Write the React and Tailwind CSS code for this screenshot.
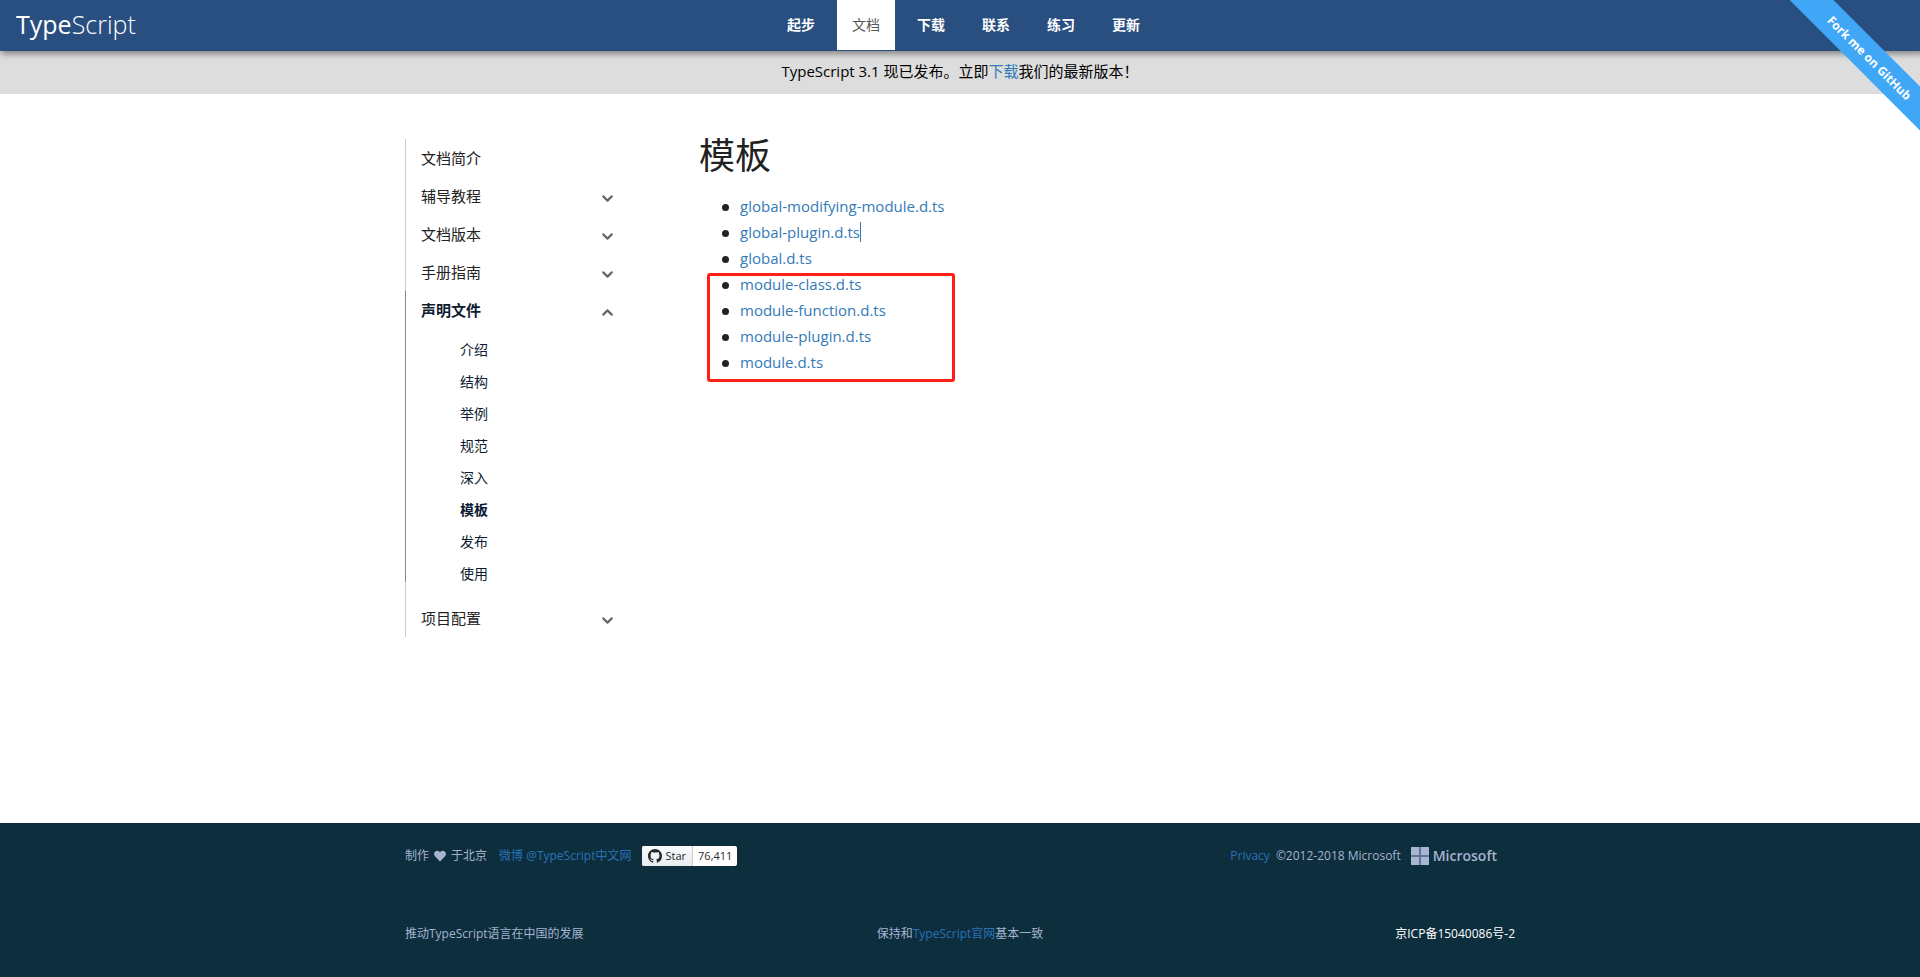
import { FaHeart } from "react-icons/fa";
import { FiChevronDown, FiChevronUp } from "react-icons/fi";

const navLinks = [
  { name: "起步" },
  { name: "文档", active: true },
  { name: "下载" },
  { name: "联系" },
  { name: "练习" },
  { name: "更新" },
];

const menu = [
  { name: "文档简介" },
  { name: "辅导教程", items: [] },
  { name: "文档版本", items: [] },
  { name: "手册指南", items: [] },
  {
    name: "声明文件",
    open: true,
    items: ["介绍", "结构", "举例", "规范", "深入", "模板", "发布", "使用"],
  },
  { name: "项目配置", items: [] },
];

const templates = [
  "global-modifying-module.d.ts",
  "global-plugin.d.ts",
  "global.d.ts",
];

const moduleTemplates = [
  "module-class.d.ts",
  "module-function.d.ts",
  "module-plugin.d.ts",
  "module.d.ts",
];

function Navbar() {
  return (
    <header className="relative z-10 flex h-[51px] items-start justify-center bg-[#294e80] shadow-[3px_1px_6px_2px_rgba(0,0,0,0.4)]">
      <a
        href="#"
        className="absolute left-4 top-0 text-[25px] leading-[48px] text-white"
      >
        Type<span className="font-light">Script</span>
      </a>
      <nav className="flex gap-[7px] pl-[7px]">
        {navLinks.map((link) => (
          <a
            key={link.name}
            href="#"
            className={`px-[15px] text-sm leading-[50px] ${
              link.active ? "bg-white text-[#555]" : "font-bold text-white"
            }`}
          >
            {link.name}
          </a>
        ))}
      </nav>
    </header>
  );
}

function Ribbon() {
  return (
    <div className="pointer-events-none absolute right-0 top-0 z-20 h-[150px] w-[150px] overflow-hidden">
      <a
        href="#"
        className="absolute -right-[48px] top-[41px] block w-[200px] rotate-45 bg-[#3fa7f5] pl-1 text-center text-xs font-bold leading-[31px] text-white"
      >
        Fork me on GitHub
      </a>
    </div>
  );
}

function Sidebar() {
  return (
    <aside className="w-[219px] shrink-0">
      <ul className="border-l border-[#ccc]">
        {menu.map((section) => (
          <li
            key={section.name}
            className={
              section.open ? "-ml-px mb-[17px] border-l border-[#888]" : ""
            }
          >
            <button
              className={`flex h-[38px] w-full items-center justify-between pl-[15px] pr-2 text-[15px] ${
                section.open ? "font-bold text-[#0d1b33]" : "text-[#222]"
              }`}
            >
              {section.name}
              {section.items &&
                (section.open ? (
                  <FiChevronUp size={17} strokeWidth={3} className="mt-1 text-[#666]" />
                ) : (
                  <FiChevronDown size={17} strokeWidth={3} className="mt-1 text-[#666]" />
                ))}
            </button>
            {section.open && (
              <ul className="flex flex-col gap-4 pl-[54px] pt-[13px] text-sm leading-4 text-[#0d1b33]">
                {section.items.map((item) => (
                  <li key={item}>
                    <a href="#" className={item === "模板" ? "font-bold" : ""}>
                      {item}
                    </a>
                  </li>
                ))}
              </ul>
            )}
          </li>
        ))}
      </ul>
    </aside>
  );
}

function FileList({ files }) {
  return (
    <ul className="pl-[23px]">
      {files.map((file) => (
        <li
          key={file}
          className="flex h-[26px] items-center before:mr-[11px] before:mt-0.5 before:h-[7px] before:w-[7px] before:rounded-full before:bg-[#222]"
        >
          <a
            href="#"
            className={`leading-5 text-[#337ab7] ${
              file === "global-plugin.d.ts" ? "border-r border-[#337ab7]" : ""
            }`}
          >
            {file}
          </a>
        </li>
      ))}
    </ul>
  );
}

function Content() {
  return (
    <main className="pl-[75px]">
      <h1 className="text-4xl leading-[34px] text-[#222]">模板</h1>
      <div className="mt-5 text-[15px]">
        <FileList files={templates} />
        <div className="relative">
          <FileList files={moduleTemplates} />
          <div className="pointer-events-none absolute left-2 top-0.5 h-[109px] w-[248px] rounded-[3px] border-3 border-[#ff2015]"></div>
        </div>
      </div>
    </main>
  );
}

function GithubMark() {
  return (
    <svg viewBox="0 0 16 16" className="h-3.5 w-3.5 fill-[#24292e]">
      <path d="M8 0C3.58 0 0 3.58 0 8c0 3.54 2.29 6.53 5.47 7.59.4.07.55-.17.55-.38 0-.19-.01-.82-.01-1.49-2.01.37-2.53-.49-2.69-.94-.09-.23-.48-.94-.82-1.13-.28-.15-.68-.52-.01-.53.63-.01 1.08.58 1.23.82.72 1.21 1.87.87 2.33.66.07-.52.28-.87.51-1.07-1.78-.2-3.64-.89-3.64-3.95 0-.87.31-1.59.82-2.15-.08-.2-.36-1.02.08-2.12 0 0 .67-.21 2.2.82.64-.18 1.32-.27 2-.27.68 0 1.36.09 2 .27 1.53-1.04 2.2-.82 2.2-.82.44 1.1.16 1.92.08 2.12.51.56.82 1.27.82 2.15 0 3.07-1.87 3.75-3.65 3.95.29.25.54.73.54 1.48 0 1.07-.01 1.93-.01 2.2 0 .21.15.46.55.38A8.013 8.013 0 0016 8c0-4.42-3.58-8-8-8z" />
    </svg>
  );
}

function Footer() {
  return (
    <footer className="mt-auto bg-[#0d2e3d] text-xs text-[#a5b3d0]">
      <div className="mx-auto max-w-[1140px] px-[15px] pb-[33px] pt-[23px]">
        <div className="flex h-5 items-center justify-between">
          <div className="flex items-center">
            <span>制作</span>
            <FaHeart size={12} className="mx-[5px]" />
            <span>于北京</span>
            <a href="#" className="ml-3 text-[#2a72b8]">
              微博 @TypeScript中文网
            </a>
            <div className="ml-2.5 flex h-5 overflow-hidden rounded-xs bg-white text-[11px] leading-5 text-[#24292e]">
              <a
                href="#"
                className="flex items-center gap-1 border-r border-[#c8ccd0] bg-linear-to-b from-[#fafbfc] to-[#e9ecef] px-1.5 font-medium"
              >
                <GithubMark />
                Star
              </a>
              <a href="#" className="px-[5px] font-medium">
                76,411
              </a>
            </div>
          </div>
          <div className="flex items-center pr-[18px]">
            <a href="#" className="text-[#2a72b8]">
              Privacy
            </a>
            <span className="ml-1.5">©2012-2018 Microsoft</span>
            <svg viewBox="0 0 18 18" className="ml-2.5 h-[18px] w-[18px]">
              <path fill="#5f7593" d="M0 0h18v18H0z" />
              <path
                fill="#a8b6d4"
                d="M0 0h8v8H0zM10 0h8v8h-8zM0 10h8v8H0zM10 10h8v8h-8z"
              />
            </svg>
            <span className="ml-1 text-sm font-semibold">Microsoft</span>
          </div>
        </div>
        <div className="mt-[58px] grid grid-cols-3 leading-5">
          <p>推动TypeScript语言在中国的发展</p>
          <p className="text-center">
            保持和
            <a href="#" className="text-[#2a72b8]">
              TypeScript官网
            </a>
            基本一致
          </p>
          <p className="text-right">
            <a href="#" className="text-white">
              京ICP备15040086号-2
            </a>
          </p>
        </div>
      </div>
    </footer>
  );
}

export default function App() {
  return (
    <div className="relative flex min-h-screen flex-col bg-white font-['Open_Sans','Noto_Sans_CJK_SC',sans-serif]">
      <Navbar />
      <Ribbon />
      <div className="bg-[#ddd] pb-[11px] pt-[9px] text-center text-[15px] leading-[23px] text-black">
        TypeScript 3.1 现已发布。立即
        <a href="#" className="text-[#337ab7]">
          下载
        </a>
        我们的最新版本！
      </div>
      <div className="mx-auto mt-[45px] flex w-full max-w-[1140px] px-[15px] pb-16">
        <Sidebar />
        <Content />
      </div>
      <Footer />
    </div>
  );
}
